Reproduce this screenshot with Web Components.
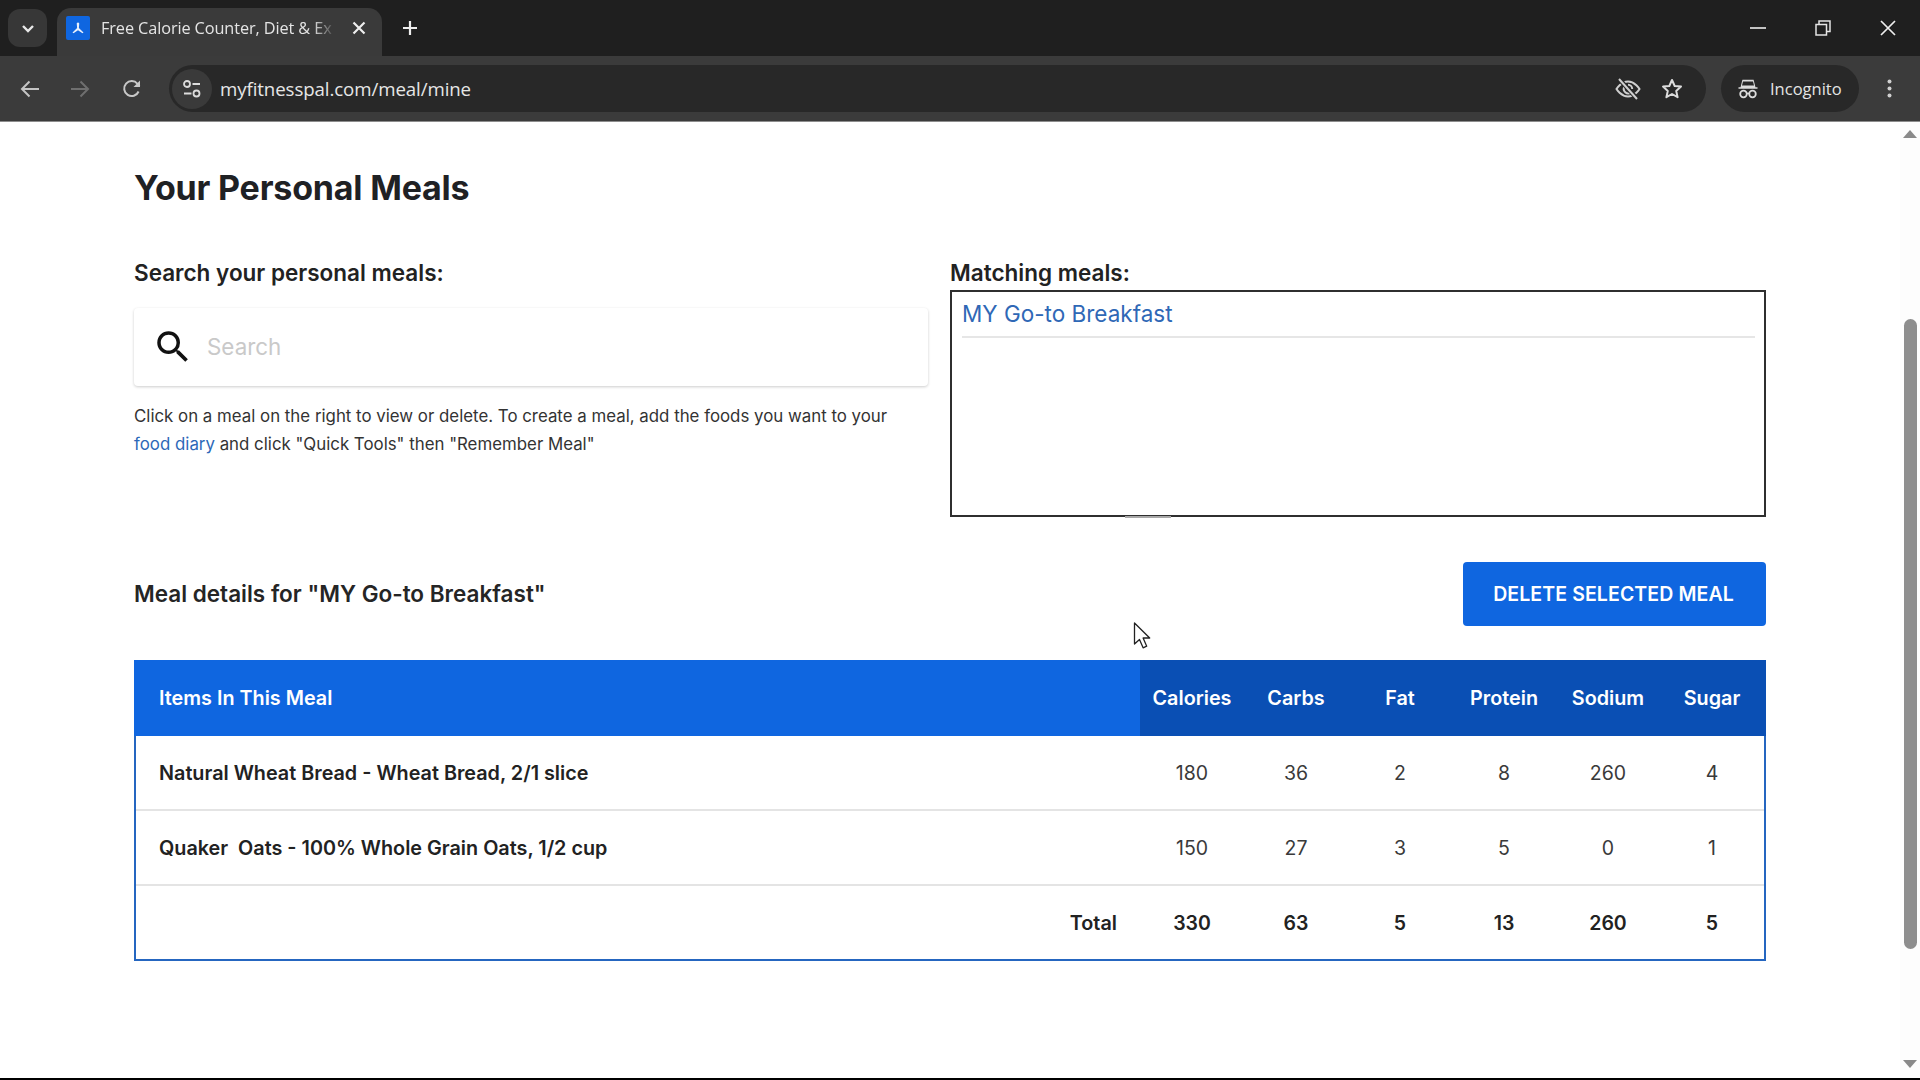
<!DOCTYPE html>
<html lang="en"><head><meta charset="utf-8"><title>Your Personal Meals</title>
<style>
html,body{margin:0;padding:0;height:1080px;overflow:hidden;background:#fff;font-family:Inter,"Liberation Sans",sans-serif}
</style></head><body>
<app-shell>
  <browser-chrome slot="top"></browser-chrome>
  <meals-page></meals-page>
</app-shell>
<script>
function def(name, css, html){
  customElements.define(name, class extends HTMLElement{
    constructor(){super();const r=this.attachShadow({mode:'open'});r.innerHTML='<style>'+css+'</style>'+(typeof html==='function'?html(this):html);}
  });
}
def('app-shell',`
:host{display:flex;flex-direction:column;width:1920px;height:1080px;overflow:hidden;position:relative;background:#000}
.mid{display:flex;height:956px;background:#fff}
.main{flex:1;min-width:0}
.bar{flex:1;background:#000}
.cursor{position:absolute;left:1133px;top:622px;width:18px;height:27px}
`,`<slot name="top"></slot>
<div class="mid"><div class="main"><slot></slot></div><page-scrollbar></page-scrollbar></div>
<div class="bar"></div>
<svg class="cursor" viewBox="0 0 18 27"><path d="M1.500 1v21l5-4.600 3.600 8.400 3.600-1.600-3.600-8.200h6.600z" fill="#fff" stroke="#222" stroke-width="1.300" stroke-linejoin="round"/></svg>`);

def('page-scrollbar',`
:host{display:flex;flex-direction:column;align-items:center;width:20px;background:#fdfdfd}
.up{margin-top:8px}
.thumb{width:13px;height:630px;margin-top:181px;background:#8e8e8e;border-radius:7px}
.dn{margin-top:auto;margin-bottom:10px}
`,`<svg class="up" width="14" height="8" viewBox="0 0 14 8"><path d="M7 0l7 8H0z" fill="#8a8a8a"/></svg>
<div class="thumb"></div>
<svg class="dn" width="14" height="8" viewBox="0 0 14 8"><path d="M0 0h14L7 8z" fill="#8a8a8a"/></svg>`);

const ui='"Open Sans","Noto Sans",sans-serif';
def('browser-chrome',`
:host{display:block;font-family:${ui};color:#e4e4e4}
.strip{height:56px;background:#1f1f1f;display:flex;align-items:flex-end;padding-left:8px}
.chev{width:39px;height:38px;margin-bottom:9px;background:#373737;border-radius:12px;display:flex;align-items:center;justify-content:center}
.tab{width:325px;height:48px;margin-left:10px;background:#3a3a3a;border-radius:14px 14px 0 0;display:flex;align-items:center;box-sizing:border-box;padding:0 16px 8px 9px}
.fav{width:24px;height:24px;flex:none;display:block}
.title{flex:1;margin-left:11px;font-size:16.300px;white-space:nowrap;overflow:hidden;
 -webkit-mask-image:linear-gradient(90deg,#000 90%,transparent);mask-image:linear-gradient(90deg,#000 90%,transparent);letter-spacing:-.1px}
.close{margin-left:16px;display:block;flex:none}
.plus{margin:0 0 9px 20px;align-self:flex-end;height:38px;display:flex;align-items:center}
.win{margin-left:auto;display:flex;align-self:stretch}
.win div{height:56px;width:65px;display:flex;align-items:center;justify-content:center}
.bar{height:65px;background:#3b3b3b;border-bottom:1px solid #8d8d8d;display:flex;align-items:center;padding-left:10px}
.nav{width:40px;display:flex;justify-content:center}
.nav+.nav{margin-left:10px}
.nav.rl{margin-left:12px}
.omni{width:1537px;height:47px;margin-left:17px;border-radius:24px;background:#282828;display:flex;align-items:center;box-sizing:border-box;padding-right:23px}
.tune{width:40px;height:40px;margin-left:3px;border-radius:50%;background:#3a3a3a;display:flex;align-items:center;justify-content:center}
.url{margin-left:8px;font-size:18.700px;color:#e6e6e6;letter-spacing:-.1px}
.sp{flex:1}
.pill{width:138px;height:47px;margin-left:15px;border-radius:24px;background:#282828;display:flex;align-items:center;box-sizing:border-box;padding-left:17px;gap:12px;font-size:16.500px}
.dots{margin-left:28px;display:block}
`,`<div class="strip">
  <div class="chev"><svg width="14" height="9" viewBox="0 0 14 9"><path d="M2 2l5 5 5-5" fill="none" stroke="#e8e8e8" stroke-width="2.400"/></svg></div>
  <div class="tab">
    <svg class="fav" viewBox="0 0 24 24"><rect width="24" height="24" rx="2" fill="#0f66e0"/><path d="M12 6.500c1 0 1.400.8 1.200 1.600L12.900 12l4.600 4.600-1 .6-4.500-3-4.500 3-1-.6 4.600-4.600-.3-3.900c-.2-.8.2-1.600 1.200-1.600z" fill="#e8f0fc"/></svg>
    <span class="title">Free Calorie Counter, Diet &amp; Ex</span>
    <svg class="close" width="14" height="14" viewBox="0 0 14 14"><path d="M1.500 1.500l11 11M12.500 1.500l-11 11" stroke="#eee" stroke-width="2.200"/></svg>
  </div>
  <div class="plus"><svg width="16" height="16" viewBox="0 0 16 16"><path d="M8 1v14M1 8h14" stroke="#eee" stroke-width="2.200"/></svg></div>
  <div class="win">
    <div><svg width="16" height="2" viewBox="0 0 16 2"><path d="M0 1h16" stroke="#eee" stroke-width="1.600"/></svg></div>
    <div><svg width="16" height="16" viewBox="0 0 16 16"><path d="M1 4.500h10.500v10.500H1zM4 4.500V1h11v10.500h-3.500" fill="none" stroke="#e4e4e4" stroke-width="1.500"/></svg></div>
    <div><svg width="16" height="16" viewBox="0 0 16 16"><path d="M1 1l14 14M15 1L1 15" stroke="#eee" stroke-width="1.700"/></svg></div>
  </div>
</div>
<div class="bar">
  <div class="nav"><svg width="20" height="18" viewBox="0 0 20 18"><path d="M19 9H2M9.500 1.500L2 9l7.500 7.500" fill="none" stroke="#c4c4c4" stroke-width="2"/></svg></div>
  <div class="nav"><svg width="20" height="18" viewBox="0 0 20 18"><path d="M1 9h17M10.500 1.500L18 9l-7.500 7.500" fill="none" stroke="#6f6f6f" stroke-width="2"/></svg></div>
  <div class="nav rl"><svg width="20" height="20" viewBox="0 0 20 20"><path d="M16.600 12.500A7.500 7.500 0 1 1 15.500 4.800L17.500 7" fill="none" stroke="#c8c8c8" stroke-width="2"/><path d="M18 1.500v6.500h-6.500z" fill="#c8c8c8"/></svg></div>
  <div class="omni">
    <div class="tune"><svg width="20" height="20" viewBox="0 0 20 20"><circle cx="5" cy="5" r="3" fill="none" stroke="#dcdcdc" stroke-width="1.800"/><path d="M10.500 5H18M2 14.500h7.500" stroke="#dcdcdc" stroke-width="1.800"/><circle cx="14.500" cy="14.500" r="3" fill="none" stroke="#dcdcdc" stroke-width="1.800"/></svg></div>
    <span class="url">myfitnesspal.com/meal/mine</span>
    <span class="sp"></span>
    <svg width="26" height="22" viewBox="0 0 26 22" style="display:block"><path d="M1.500 11S6 3.500 13 3.500 24.500 11 24.500 11 20 18.500 13 18.500 1.500 11 1.500 11z" fill="none" stroke="#cfcfcf" stroke-width="2"/><path d="M9.500 8.500a4.500 4.500 0 0 0 6.500 6M13 6.800a4.300 4.300 0 0 1 4.200 4.200" fill="none" stroke="#cfcfcf" stroke-width="2"/><path d="M4.500 1.500l17.500 19" stroke="#282828" stroke-width="4.500"/><path d="M4 1l18 20" stroke="#cfcfcf" stroke-width="2"/></svg>
    <svg style="margin-left:20px;display:block" width="22" height="21" viewBox="0 0 22 21"><path d="M11 2l2.700 6 6.300.6-4.800 4.300 1.400 6.300L11 16l-5.600 3.200 1.400-6.300L2 8.600 8.300 8z" fill="none" stroke="#dcdcdc" stroke-width="2" stroke-linejoin="round"/></svg>
  </div>
  <div class="pill">
    <svg width="20" height="20" viewBox="0 0 20 20" style="display:block;flex:none"><path d="M5 1.500h10l1.500 6h-13zM0.500 9h19" fill="#dcdcdc" stroke="#dcdcdc" stroke-width="1.500"/><path d="M5 2.500h10l1 4H4z" fill="#282828"/><circle cx="5.500" cy="15" r="3.300" fill="none" stroke="#dcdcdc" stroke-width="1.800"/><circle cx="14.500" cy="15" r="3.300" fill="none" stroke="#dcdcdc" stroke-width="1.800"/><path d="M8.500 14.500h3" stroke="#dcdcdc" stroke-width="1.500"/></svg>
    <span>Incognito</span>
  </div>
  <svg class="dots" width="5" height="19" viewBox="0 0 5 19"><circle cx="2.500" cy="2.500" r="2" fill="#d0d0d0"/><circle cx="2.500" cy="9.500" r="2" fill="#d0d0d0"/><circle cx="2.500" cy="16.500" r="2" fill="#d0d0d0"/></svg>
</div>`);

def('meals-page',`
:host{display:block;box-sizing:border-box;height:956px;padding:46px 0 0 134px;color:#1e1e1e;font-family:Inter,"Liberation Sans",sans-serif;width:1766px}
h1{margin:0;font-size:34px;line-height:40px;font-weight:700;letter-spacing:-.2px;color:#1f2124}
.cols{display:grid;grid-template-columns:794px 816px;column-gap:22px;margin-top:52px}
.lab{font-size:22.500px;line-height:26px;font-weight:600;color:#222}
.pr{margin:16px 0 0;font-size:16.850px;line-height:28px;color:#333}
.pr a{color:#2d68b8;text-decoration:none}
.det{display:flex;align-items:center;justify-content:space-between;margin-top:45px}
.det h2{margin:0 0 2px;font-size:22.500px;font-weight:600;color:#252525}
.tbl{margin-top:34px}
`,`<h1>Your Personal Meals</h1>
<div class="cols">
  <div>
    <div class="lab">Search your personal meals:</div>
    <search-box></search-box>
    <p class="pr">Click on a meal on the right to view or delete. To create a meal, add the foods you want to your<br><a href="#">food diary</a> and click "Quick Tools" then "Remember Meal"</p>
  </div>
  <div>
    <div class="lab">Matching meals:</div>
    <meal-list></meal-list>
  </div>
</div>
<div class="det"><h2>Meal details for "MY Go-to Breakfast"</h2><action-button>DELETE SELECTED MEAL</action-button></div>
<meal-table class="tbl"></meal-table>`);

def('search-box',`
:host{display:flex;align-items:center;box-sizing:border-box;height:78px;margin-top:22px;background:#fff;border-radius:4px;box-shadow:0 1px 3px rgba(0,0,0,.2);padding-left:18px}
svg{display:block;flex:none}
span{margin:0 0 2px 13px;font-size:22.400px;color:#c9c9c9}
`,`<svg width="42" height="42" viewBox="0 0 24 24"><path d="M15.500 14h-.79l-.28-.27A6.470 6.470 0 0 0 16 9.500 6.500 6.500 0 1 0 9.500 16c1.610 0 3.090-.59 4.230-1.570l.27.28v.79l5 4.990L20.490 19l-4.990-5zm-6 0C7.010 14 5 11.990 5 9.500S7.010 5 9.500 5 14 7.010 14 9.500 11.990 14 9.500 14z" fill="#111"/></svg><span>Search</span>`);

def('meal-list',`
:host{display:block;position:relative;box-sizing:border-box;height:227px;margin-top:4px;border:2px solid #2f2f2f;padding:0 9px 0 10px}
.it{height:46px;box-sizing:border-box;border-bottom:2px solid #e6e6e6;font-size:22.500px;line-height:44px;color:#2f68b6}
.nub{position:absolute;left:173px;bottom:-3px;width:46px;height:2px;background:#a8a8a8}
`,`<div class="it">MY Go-to Breakfast</div><div class="nub"></div>`);

def('action-button',`
:host{display:flex;align-items:center;justify-content:center;width:303px;height:64px;background:#0f66e0;color:#fff;border-radius:4px;font-size:19.500px;font-weight:600;letter-spacing:.1px;box-sizing:border-box;padding-right:2px}
`,`<slot></slot>`);

def('meal-table',`
:host{display:block;box-sizing:border-box;width:1632px;border:2px solid #2566c0;border-top:0;font-family:Inter,"Liberation Sans",sans-serif}
.r{display:grid;grid-template-columns:1fr repeat(6,104px);height:73px;align-items:center;text-align:center;font-size:19.500px;color:#3a3a3a;border-bottom:2px solid #e4e4e4}
.r:last-child{border-bottom:0;height:73px}
.r>:first-child{text-align:left;padding-left:23px;font-size:19.800px;font-weight:600;color:#222}
.h{height:76px;margin:0 -2px;border:0;color:#fff;font-weight:600;background:#0f66e0;grid-template-columns:1006px repeat(5,104px) 106px;align-items:stretch;font-size:19.800px}
.h>div{display:flex;align-items:center;justify-content:center;background:#0a4fb4;padding-top:0}
.h>:last-child{padding-right:2px}
.h>:first-child{background:#0f66e0;justify-content:flex-start;padding-left:25px;color:#fff}
.t{font-weight:600;color:#222}
.t>:first-child{text-align:right;padding-right:23px}
`,()=>{
 const head=['Items In This Meal','Calories','Carbs','Fat','Protein','Sodium','Sugar'];
 const rows=[['Natural Wheat Bread - Wheat Bread, 2/1 slice',180,36,2,8,260,4],['Quaker&nbsp; Oats - 100% Whole Grain Oats, 1/2 cup',150,27,3,5,0,1]];
 const total=['Total',330,63,5,13,260,5];
 const cell=a=>a.map(x=>`<div>${x}</div>`).join('');
 return `<div class="r h">${cell(head)}</div>`+rows.map(r=>`<div class="r">${cell(r)}</div>`).join('')+`<div class="r t">${cell(total)}</div>`;
});
</script></body></html>
